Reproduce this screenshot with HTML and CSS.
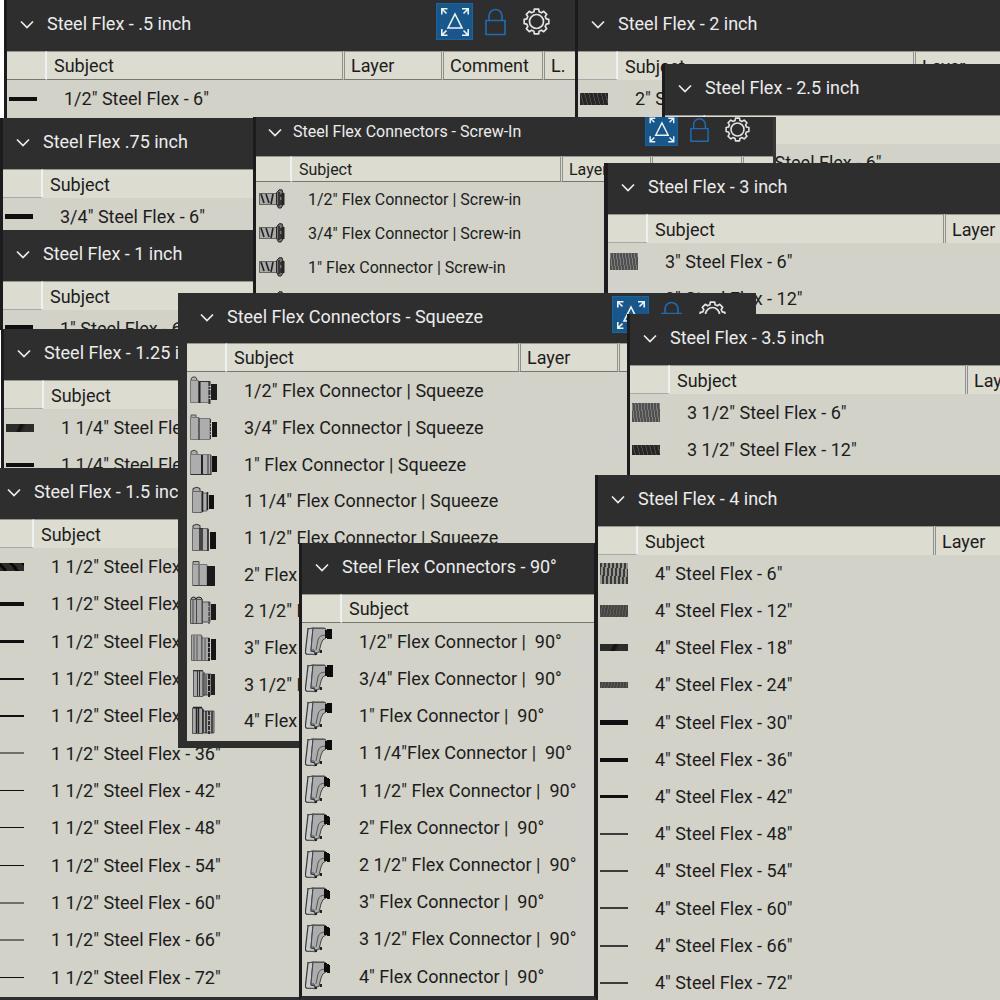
FILE: index.html
```html
<!DOCTYPE html>
<html lang="en">
<head>
<meta charset="utf-8">
<title>Steel Flex tool sets</title>
<link rel="stylesheet" href="styles.css">
</head>
<body>
<svg class="sprite" aria-hidden="true">
  <symbol id="chevron" viewBox="0 0 14 9"><path d="M1 1.5 7 7.5 13 1.5" fill="none" stroke="currentColor" stroke-width="1.7"/></symbol>
  <symbol id="fit" viewBox="0 0 37 37">
    <rect x=".5" y=".5" width="36" height="36" fill="#17578c" stroke="#1c649f"/>
    <g fill="none" stroke="#eef4f8" stroke-width="1.6">
      <path d="M19 11 26 25H12Z"/>
      <path d="M5.800 11.500V5.800H11.500M6 6l4.500 4.500M26 5.800h6.200V11.500M32 6l-4.500 4.500M5.800 26v6.200H11.500M6 32l4.500-4.500M32.200 26v6.200H26M32 32l-4.500-4.500"/>
    </g>
  </symbol>
  <symbol id="lock" viewBox="0 0 21 28"><path d="M1 12.500H20V26.500H1ZM4 12.500V8a6.500 6.500 0 0 1 13 0V12.500" fill="none" stroke="#1e6db3" stroke-width="1.6"/></symbol>
  <symbol id="gear" viewBox="-13.500 -13.500 27 27">
    <path d="M-2.600-9.700-2.200-12.300 2.200-12.300 2.600-9.700 5-8.700 7.200-10.200 10.200-7.200 8.700-5 9.700-2.600 12.300-2.200V2.200L9.700 2.600 8.700 5 10.200 7.200 7.200 10.200 5 8.700 2.600 9.700 2.200 12.300H-2.200L-2.600 9.700-5 8.700-7.200 10.200-10.200 7.200-8.700 5-9.700 2.600-12.300 2.200V-2.200L-9.700-2.600-8.700-5-10.200-7.200-7.200-10.200-5-8.700Z" fill="none" stroke="#e4e4e4" stroke-width="1.7" stroke-linejoin="round"/>
    <circle r="7" fill="none" stroke="#e4e4e4" stroke-width="1.700"/>
  </symbol>
  <symbol id="screw" viewBox="0 0 26 20">
    <rect x=".5" y="4.500" width="17" height="11" fill="#aaa" stroke="#666"/>
    <path d="M2 5l3 9M7 5l3 9M14 5l-2 10" stroke="#222" stroke-width="1.600"/>
    <path d="M17.500 4 20 .8H23L24 4V16L22 19H19.500L17.500 15Z" fill="#777" stroke="#222"/>
    <path d="M20 3v14M22 5v3M22 11v5" stroke="#222" stroke-width="1.500"/>
    <rect x="22.500" y="4" width="3" height="12" fill="#2b2424"/>
  </symbol>
  <symbol id="sq1" viewBox="0 0 28 30">
    <g fill="#adadad" stroke="#777"><path d="M1 4.500Q1 1 3 1H5Q7 1 7 5" stroke="#444"/><path d="M.5 4.500H8.500V26.500H.5Z"/><path d="M9 5.500H19V26.500H9Z"/></g>
    <path d="M9.500 5V27" stroke="#222" stroke-width="2"/><path d="M9 5.500H20" stroke="#333"/><path d="M19.500 5V29" stroke="#333" stroke-width="2" stroke-dasharray="5 1 2 1"/><rect x="21" y="8" width="6" height="16" fill="#1d1d1d"/>
  </symbol>
  <symbol id="sq2" viewBox="0 0 28 30">
    <g fill="#adadad" stroke="#777"><path d="M1 4.500V2H6V5" stroke="#555"/><path d="M.5 4.500H9V26.500H.5Z"/><path d="M9 5.500H20V26.500H9Z"/></g>
    <path d="M9 5V27" stroke="#333"/><path d="M20.500 6V27" stroke="#333" stroke-dasharray="4 1 2 1"/><rect x="22" y="9" width="5" height="15" fill="#161616"/>
  </symbol>
  <symbol id="sq3" viewBox="0 0 28 30">
    <g fill="#adadad" stroke="#777"><path d="M1 5V2.500Q4 0 7 2.500V5" stroke="#444"/><path d="M.5 5.500H20.500V25.500H.5Z"/></g>
    <path d="M12 6V26" stroke="#222" stroke-width="2"/><path d="M18 6V25M21 6V26M.5 25.500H21" stroke="#333"/><rect x="22" y="7" width="5" height="16" fill="#111"/>
  </symbol>
  <symbol id="sq4" viewBox="0 0 28 30">
    <g fill="#adadad" stroke="#666"><path d="M3 5V2.500Q7 0 10 2.500V5" stroke="#333"/><path d="M2.500 5.500H12V26.500H2.500Z"/><path d="M12 7H17V25H12Z"/></g>
    <path d="M12.500 5V26M17.500 6V24" stroke="#222" stroke-width="1.500"/><rect x="19" y="9" width="5" height="14" fill="#111"/>
  </symbol>
  <symbol id="sq5" viewBox="0 0 28 30">
    <g fill="#adadad" stroke="#666"><path d="M3 5V2.500Q7 0 10 2.500V5" stroke="#333"/><path d="M2.500 5.500H18V27.500H2.500Z"/></g>
    <path d="M10 5V27M12 5V27M18 6V28" stroke="#222" stroke-width="1.500"/><rect x="20" y="9" width="6" height="17" fill="#111"/>
  </symbol>
  <symbol id="sq6" viewBox="0 0 28 30">
    <g fill="#adadad" stroke="#777"><path d="M3 5V2.500H9V5" stroke="#444"/><path d="M2.500 5.500H17V26.500H2.500Z"/></g>
    <path d="M9 6V27M3 26.500H17" stroke="#444"/><rect x="17" y="7" width="8" height="20" fill="#1a1a1a"/>
  </symbol>
  <symbol id="sq7" viewBox="0 0 28 30">
    <g fill="#a8a8a8" stroke="#555"><path d="M1 4Q1 1 3.500 1 6 1 6 4 6 1 9 1 12 1 12 4" stroke="#222"/><path d="M.5 3.500H12.500V27.500H.5Z"/><path d="M12.500 6H20V26H12.500Z"/></g>
    <path d="M3 4V28M6.500 4V28M12 4V28" stroke="#444"/><path d="M19 6V28" stroke="#222" stroke-dasharray="4 1"/><rect x="21" y="8" width="5" height="16" fill="#1a1a1a"/>
  </symbol>
  <symbol id="sq8" viewBox="0 0 28 30">
    <g fill="#a8a8a8" stroke="#666"><path d="M1.500 2H11.500V27.500H1.500Z"/><path d="M11.500 5H19V27.500H11.500Z"/></g>
    <path d="M4 3V27M7 3V27M12 3V27M15 6V27" stroke="#555"/><path d="M19 5V28" stroke="#222" stroke-width="2" stroke-dasharray="4 1"/><rect x="21" y="6" width="5" height="21" fill="#161616"/>
  </symbol>
  <symbol id="sq9" viewBox="0 0 28 30">
    <g fill="#a8a8a8" stroke="#555"><path d="M3.500 2H13V27.500H3.500Z"/><path d="M13 5H21V26H13Z"/></g>
    <path d="M3 1.500H13M7.500 2V27M9.500 2V27M14 3V27M16 6V26" stroke="#333"/><path d="M19 5V28" stroke="#222" stroke-width="2" stroke-dasharray="5 1"/><rect x="21" y="5" width="4" height="21" fill="#222"/>
  </symbol>
  <symbol id="sq10" viewBox="0 0 28 30">
    <g fill="#a8a8a8" stroke="#555"><path d="M2.500 2H12.500V27.500H2.500Z"/><path d="M12.500 5H24V27H12.500Z"/></g>
    <path d="M3 1.500H12M6.500 2V27M8.500 2V27M13 3V27M16 5V27M22 5V27" stroke="#222" stroke-width="1.400"/><path d="M19 5V28" stroke="#333" stroke-width="2" stroke-dasharray="4 1"/>
  </symbol>
  <symbol id="elbow" viewBox="0 0 28 30">
    <path d="M3 2 8 1 6 24 10 25V27.500L1.500 27Q0 26 .5 24Z" fill="#c6cccd" stroke="#333" stroke-width="1.200"/>
    <path d="M8 1H19Q21 1 21 3V11Q17 12 16 17L14 25 10 27 9 23 6 23Z" fill="#adadad" stroke="#444"/>
    <path d="M21 8Q14 8 13 13L11 23M2 1.500H20M1 27.500H12M14 25h3" fill="none" stroke="#555"/>
    <path d="M10 25.500H12V28H10ZM15 23H17V26H15Z" fill="#222"/>
  </symbol>
  <symbol id="el1" viewBox="0 0 28 30"><use href="#elbow"/><path d="M20 3H22V2H27V12H22V11H20Z" fill="#0c0c0c"/></symbol>
  <symbol id="el2" viewBox="0 0 28 30"><use href="#elbow"/><path d="M20 3H22V1H28V13H22V12H20Z" fill="#0c0c0c"/></symbol>
  <symbol id="el3" viewBox="0 0 28 30"><use href="#elbow"/><path d="M19 2H22V3H24V4H25V12H22V11H19Z" fill="#0c0c0c"/></symbol>
</svg>

<main class="canvas">

<section class="panel half">
  <header><button class="fold" aria-label="Collapse"><svg><use href="#chevron"/></svg></button><h2>Steel Flex - .5 inch</h2>
    <div class="tools"><button aria-label="Fit"><svg class="fit"><use href="#fit"/></svg></button><button aria-label="Lock"><svg class="lock"><use href="#lock"/></svg></button><button aria-label="Settings"><svg class="gear"><use href="#gear"/></svg></button></div></header>
  <table class="ruled"><colgroup><col class="c-icon"><col class="c-subject"><col class="c-layer"><col class="c-comment"><col></colgroup>
    <thead><tr><th></th><th>Subject</th><th>Layer</th><th>Comment</th><th>L.</th></tr></thead>
    <tbody><tr><td><i class="pipe h4"></i></td><td>1/2" Steel Flex - 6"</td></tr></tbody></table>
</section>

<section class="panel two">
  <header><button class="fold" aria-label="Collapse"><svg><use href="#chevron"/></svg></button><h2>Steel Flex - 2 inch</h2></header>
  <table><colgroup><col class="c-icon"><col class="c-subject"><col></colgroup>
    <thead><tr><th></th><th>Subject</th><th>Layer</th></tr></thead>
    <tbody><tr><td><i class="pipe h12 coil"></i></td><td>2" Steel Flex - 6"</td></tr></tbody></table>
</section>

<section class="panel two-half">
  <header><button class="fold" aria-label="Collapse"><svg><use href="#chevron"/></svg></button><h2>Steel Flex - 2.5 inch</h2></header>
  <table><colgroup><col class="c-icon"><col class="c-subject"><col></colgroup>
    <thead><tr><th></th><th>Subject</th><th>Layer</th></tr></thead>
    <tbody><tr><td><i class="pipe h12 coil"></i></td><td>2 1/2" Steel Flex - 6"</td></tr></tbody></table>
</section>

<section class="panel three-quarter">
  <header><button class="fold" aria-label="Collapse"><svg><use href="#chevron"/></svg></button><h2>Steel Flex .75 inch</h2></header>
  <table><colgroup><col class="c-icon"><col class="c-subject"></colgroup>
    <thead><tr><th></th><th>Subject</th></tr></thead>
    <tbody><tr><td><i class="pipe h5"></i></td><td>3/4" Steel Flex - 6"</td></tr></tbody></table>
</section>

<section class="panel one">
  <header><button class="fold" aria-label="Collapse"><svg><use href="#chevron"/></svg></button><h2>Steel Flex - 1 inch</h2></header>
  <table><colgroup><col class="c-icon"><col class="c-subject"></colgroup>
    <thead><tr><th></th><th>Subject</th></tr></thead>
    <tbody><tr><td><i class="pipe h7"></i></td><td>1" Steel Flex - 6"</td></tr></tbody></table>
</section>

<section class="panel one-quarter">
  <header><button class="fold" aria-label="Collapse"><svg><use href="#chevron"/></svg></button><h2>Steel Flex - 1.25 inch</h2></header>
  <table><colgroup><col class="c-icon"><col class="c-subject"></colgroup>
    <thead><tr><th></th><th>Subject</th></tr></thead>
    <tbody><tr><td><i class="pipe h8 dark"></i></td><td>1 1/4" Steel Flex - 6"</td></tr>
    <tr><td><i class="pipe h4"></i></td><td>1 1/4" Steel Flex - 12"</td></tr></tbody></table>
</section>

<section class="panel one-half">
  <header><button class="fold" aria-label="Collapse"><svg><use href="#chevron"/></svg></button><h2>Steel Flex - 1.5 inch</h2></header>
  <table><colgroup><col class="c-icon"><col class="c-subject"></colgroup>
    <thead><tr><th></th><th>Subject</th></tr></thead>
    <tbody>
    <tr><td><i class="pipe h8 twist"></i></td><td>1 1/2" Steel Flex - 6"</td></tr>
    <tr><td><i class="pipe h4"></i></td><td>1 1/2" Steel Flex - 12"</td></tr>
    <tr><td><i class="pipe h3"></i></td><td>1 1/2" Steel Flex - 18"</td></tr>
    <tr><td><i class="pipe h2"></i></td><td>1 1/2" Steel Flex - 24"</td></tr>
    <tr><td><i class="pipe h2"></i></td><td>1 1/2" Steel Flex - 30"</td></tr>
    <tr><td><i class="pipe h2 faint"></i></td><td>1 1/2" Steel Flex - 36"</td></tr>
    <tr><td><i class="pipe h1"></i></td><td>1 1/2" Steel Flex - 42"</td></tr>
    <tr><td><i class="pipe h1"></i></td><td>1 1/2" Steel Flex - 48"</td></tr>
    <tr><td><i class="pipe h1"></i></td><td>1 1/2" Steel Flex - 54"</td></tr>
    <tr><td><i class="pipe h2 faint"></i></td><td>1 1/2" Steel Flex - 60"</td></tr>
    <tr><td><i class="pipe h2 faint"></i></td><td>1 1/2" Steel Flex - 66"</td></tr>
    <tr><td><i class="pipe h1"></i></td><td>1 1/2" Steel Flex - 72"</td></tr>
    </tbody></table>
</section>

<section class="panel screw-in">
  <header><button class="fold" aria-label="Collapse"><svg><use href="#chevron"/></svg></button><h2>Steel Flex Connectors - Screw-In</h2>
    <div class="tools"><button aria-label="Fit"><svg class="fit"><use href="#fit"/></svg></button><button aria-label="Lock"><svg class="lock"><use href="#lock"/></svg></button><button aria-label="Settings"><svg class="gear"><use href="#gear"/></svg></button></div></header>
  <table class="ruled"><colgroup><col class="c-icon"><col class="c-subject"><col class="c-layer"><col class="c-comment"><col></colgroup>
    <thead><tr><th></th><th>Subject</th><th>Layer</th><th></th><th></th></tr></thead>
    <tbody>
    <tr><td><svg class="bolt"><use href="#screw"/></svg></td><td>1/2" Flex Connector | Screw-in</td></tr>
    <tr><td><svg class="bolt"><use href="#screw"/></svg></td><td>3/4" Flex Connector | Screw-in</td></tr>
    <tr><td><svg class="bolt"><use href="#screw"/></svg></td><td>1" Flex Connector | Screw-in</td></tr>
    <tr><td><svg class="bolt"><use href="#screw"/></svg></td><td></td></tr>
    </tbody></table>
</section>

<section class="panel three">
  <header><button class="fold" aria-label="Collapse"><svg><use href="#chevron"/></svg></button><h2>Steel Flex - 3 inch</h2></header>
  <table><colgroup><col class="c-icon"><col class="c-subject"><col></colgroup>
    <thead><tr><th></th><th>Subject</th><th>Layer</th></tr></thead>
    <tbody><tr><td><i class="pipe h17 ribs"></i></td><td>3" Steel Flex - 6"</td></tr>
    <tr><td><i class="pipe h8 coil"></i></td><td>3" Steel Flex - 12"</td></tr></tbody></table>
</section>

<section class="panel squeeze">
  <header><button class="fold" aria-label="Collapse"><svg><use href="#chevron"/></svg></button><h2>Steel Flex Connectors - Squeeze</h2>
    <div class="tools"><button aria-label="Fit"><svg class="fit"><use href="#fit"/></svg></button><button aria-label="Lock"><svg class="lock"><use href="#lock"/></svg></button><button aria-label="Settings"><svg class="gear"><use href="#gear"/></svg></button></div></header>
  <table class="ruled"><colgroup><col class="c-icon"><col class="c-subject"><col class="c-layer"><col></colgroup>
    <thead><tr><th></th><th>Subject</th><th>Layer</th><th></th></tr></thead>
    <tbody>
    <tr><td><svg class="part"><use href="#sq1"/></svg></td><td>1/2" Flex Connector | Squeeze</td></tr>
    <tr><td><svg class="part"><use href="#sq2"/></svg></td><td>3/4" Flex Connector | Squeeze</td></tr>
    <tr><td><svg class="part"><use href="#sq3"/></svg></td><td>1" Flex Connector | Squeeze</td></tr>
    <tr><td><svg class="part"><use href="#sq4"/></svg></td><td>1 1/4" Flex Connector | Squeeze</td></tr>
    <tr><td><svg class="part"><use href="#sq5"/></svg></td><td>1 1/2" Flex Connector | Squeeze</td></tr>
    <tr><td><svg class="part"><use href="#sq6"/></svg></td><td>2" Flex Connector | Squeeze</td></tr>
    <tr><td><svg class="part"><use href="#sq7"/></svg></td><td>2 1/2" Flex Connector | Squeeze</td></tr>
    <tr><td><svg class="part"><use href="#sq8"/></svg></td><td>3" Flex Connector | Squeeze</td></tr>
    <tr><td><svg class="part"><use href="#sq9"/></svg></td><td>3 1/2" Flex Connector | Squeeze</td></tr>
    <tr><td><svg class="part"><use href="#sq10"/></svg></td><td>4" Flex Connector | Squeeze</td></tr>
    </tbody></table>
</section>

<section class="panel three-half">
  <header><button class="fold" aria-label="Collapse"><svg><use href="#chevron"/></svg></button><h2>Steel Flex - 3.5 inch</h2></header>
  <table><colgroup><col class="c-icon"><col class="c-subject"><col></colgroup>
    <thead><tr><th></th><th>Subject</th><th>Layer</th></tr></thead>
    <tbody><tr><td><i class="pipe h19 ribs"></i></td><td>3 1/2" Steel Flex - 6"</td></tr>
    <tr><td><i class="pipe h10 coil"></i></td><td>3 1/2" Steel Flex - 12"</td></tr></tbody></table>
</section>

<section class="panel four">
  <header><button class="fold" aria-label="Collapse"><svg><use href="#chevron"/></svg></button><h2>Steel Flex - 4 inch</h2></header>
  <table><colgroup><col class="c-icon"><col class="c-subject"><col></colgroup>
    <thead><tr><th></th><th>Subject</th><th>Layer</th></tr></thead>
    <tbody>
    <tr><td><i class="pipe h21 wide-ribs"></i></td><td>4" Steel Flex - 6"</td></tr>
    <tr><td><i class="pipe h12 mesh"></i></td><td>4" Steel Flex - 12"</td></tr>
    <tr><td><i class="pipe h7 dark"></i></td><td>4" Steel Flex - 18"</td></tr>
    <tr><td><i class="pipe h6 mesh"></i></td><td>4" Steel Flex - 24"</td></tr>
    <tr><td><i class="pipe h5"></i></td><td>4" Steel Flex - 30"</td></tr>
    <tr><td><i class="pipe h4"></i></td><td>4" Steel Flex - 36"</td></tr>
    <tr><td><i class="pipe h3"></i></td><td>4" Steel Flex - 42"</td></tr>
    <tr><td><i class="pipe h2 soft"></i></td><td>4" Steel Flex - 48"</td></tr>
    <tr><td><i class="pipe h2 soft"></i></td><td>4" Steel Flex - 54"</td></tr>
    <tr><td><i class="pipe h2 soft"></i></td><td>4" Steel Flex - 60"</td></tr>
    <tr><td><i class="pipe h2 soft"></i></td><td>4" Steel Flex - 66"</td></tr>
    <tr><td><i class="pipe h2 soft"></i></td><td>4" Steel Flex - 72"</td></tr>
    </tbody></table>
</section>

<section class="panel ninety">
  <header><button class="fold" aria-label="Collapse"><svg><use href="#chevron"/></svg></button><h2>Steel Flex Connectors - 90°</h2></header>
  <table class="ruled"><colgroup><col class="c-icon"><col></colgroup>
    <thead><tr><th></th><th>Subject</th></tr></thead>
    <tbody>
    <tr><td><svg class="part"><use href="#el1"/></svg></td><td>1/2" Flex Connector |&nbsp; 90°</td></tr>
    <tr><td><svg class="part"><use href="#el2"/></svg></td><td>3/4" Flex Connector |&nbsp; 90°</td></tr>
    <tr><td><svg class="part"><use href="#el1"/></svg></td><td>1" Flex Connector |&nbsp; 90°</td></tr>
    <tr><td><svg class="part"><use href="#el1"/></svg></td><td>1 1/4"Flex Connector |&nbsp; 90°</td></tr>
    <tr><td><svg class="part"><use href="#el3"/></svg></td><td>1 1/2" Flex Connector |&nbsp; 90°</td></tr>
    <tr><td><svg class="part"><use href="#el3"/></svg></td><td>2" Flex Connector |&nbsp; 90°</td></tr>
    <tr><td><svg class="part"><use href="#el3"/></svg></td><td>2 1/2" Flex Connector |&nbsp; 90°</td></tr>
    <tr><td><svg class="part"><use href="#el3"/></svg></td><td>3" Flex Connector |&nbsp; 90°</td></tr>
    <tr><td><svg class="part"><use href="#el3"/></svg></td><td>3 1/2" Flex Connector |&nbsp; 90°</td></tr>
    <tr><td><svg class="part"><use href="#el3"/></svg></td><td>4" Flex Connector |&nbsp; 90°</td></tr>
    </tbody></table>
</section>

</main>
</body>
</html>
```
FILE: styles.css
```css
* { box-sizing: border-box; }
body { margin: 0; background: #fff; font-family: Roboto, "Liberation Sans", sans-serif; font-size: 18px; color: #1c1c1c; }
.sprite { display: none; }
.canvas { position: relative; min-height: 100vh; overflow: hidden; }

/* Floating tool-set windows */
.panel { position: absolute; overflow: hidden; background: #d2d2c8; border-left: 3px solid #1c1c1e; }
.panel header { display: flex; align-items: flex-start; height: 51px; background: #2e2e2e; color: #ececec; }
.panel h2 { margin: 0; font-size: 18px; font-weight: 400; line-height: 48px; white-space: nowrap; }
button { padding: 0; border: 0; background: none; color: inherit; display: block; }
button svg { display: block; }
.fold { width: 40px; padding: 20px 13px; }
.fold svg { width: 14px; height: 9px; }
.tools { display: flex; align-items: center; margin-left: auto; padding: 3px 25px 0 0; }
.fit { width: 37px; height: 37px; margin-right: 12px; }
.lock { width: 21px; height: 28px; margin-right: 17px; }
.gear { width: 27px; height: 27px; }

/* Tool lists */
table { width: 100%; table-layout: fixed; border-collapse: separate; border-spacing: 0; }
.c-icon { width: 40px; }
.c-subject { width: 295px; }
.c-layer { width: 99px; }
.c-comment { width: 101px; }
th { height: 29px; padding: 0 0 0 7px; background: #dcdcd0; border-top: 1px solid #96968f; font-weight: 400; text-align: left; white-space: nowrap; }
th:first-child { border-bottom: 1px solid #a6a9ac; border-right: 2px solid #eef0f2; }
th + th + th { border-left: 3px double #8f8f8c; padding-left: 6px; }
.ruled th { border-bottom: 1px solid #777772; }
td { height: 37px; padding: 0 0 0 17px; white-space: nowrap; }
td:first-child { padding-left: 2px; }
.pipe, td svg { display: block; }
.part { width: 28px; height: 30px; }
.bolt { width: 26px; height: 20px; }

/* Conduit swatches */
.pipe { width: 28px; background: #0e0f0e; }
.h1 { height: 1px; }
.h2 { height: 2px; }
.h3 { height: 3px; }
.h4 { height: 4px; }
.h5 { height: 5px; }
.h6 { height: 6px; }
.h7 { height: 7px; }
.h8 { height: 8px; }
.h10 { height: 10px; }
.h12 { height: 12px; }
.h17 { height: 17px; }
.h19 { height: 19px; }
.h21 { height: 21px; }
.faint { background: #6f706b; }
.soft { background: #3c3c3a; }
.dark { background: linear-gradient(115deg, #2c2c2b 40%, #101010 50%, #2e2d2b 65%); }
.coil { background: repeating-linear-gradient(75deg, #262626 0 3px, #4b4a47 3px 4px); }
.twist { background: repeating-linear-gradient(50deg, #2e2b2a 0 6px, #0a0a0a 6px 9px); }
.ribs { background: repeating-linear-gradient(82deg, #505050 0 2px, #7d7d7a 2px 3px); }
.wide-ribs { background: repeating-linear-gradient(97deg, #3a3a39 0 2px, #969691 2px 4px); }
.mesh { background: repeating-linear-gradient(100deg, #464443 0 2px, #5e5b59 2px 3px); }

/* Window placement, back to front */
.half { left: 4px; top: 0; width: 573px; height: 118px; border-right: 2px solid #2a2a2a; }
.two { left: 575px; right: 0; top: 0; height: 118px; }
.two-half { left: 662px; right: 0; top: 64px; height: 100px; }
.three-quarter { left: 0; top: 118px; width: 255px; height: 112px; }
.one { left: 0; top: 230px; width: 255px; height: 100px; }
.one-quarter { left: 1px; top: 329px; width: 254px; height: 140px; }
.one-half { left: -9px; top: 468px; width: 320px; height: 532px; border-bottom: 3px solid #2e2e2e; }
.screw-in { left: 253px; top: 117px; width: 523px; height: 180px; border-right: 3px solid #3a3737; }
.three { left: 604px; right: 0; top: 163px; height: 155px; border-left-width: 4px; }
.squeeze { left: 178px; top: 293px; width: 578px; height: 455px; border: solid #2e2e2e; border-width: 0 5px 7px 9px; }
.three-half { left: 627px; right: 0; top: 314px; height: 165px; }
.four { left: 595px; right: 0; top: 475px; height: 530px; }
.ninety { left: 299px; top: 543px; width: 298px; height: 457px; border-right: 3px solid #1c1c1e; border-bottom: 4px solid #2e2e2e; }

/* Row rhythm of the long lists */
.one-half tr:nth-child(3n) td { height: 38px; }
.four tr:nth-child(5n) td, .ninety tr:nth-child(5n) td { height: 38px; }
.squeeze tr:nth-child(3n) td { height: 36px; }
.squeeze header { height: 50px; }
.squeeze .c-subject { width: 291px; }
.squeeze td:first-child { padding-left: 3px; }
.ninety td:first-child { padding-left: 3px; }

/* The screw-in window is shown at a smaller scale */
.screw-in header { height: 39px; }
.screw-in h2 { font-size: 16px; line-height: 30px; }
.screw-in .fold { width: 37px; padding: 11px 12px; }
.screw-in .tools { padding: 0 23px 0 0; margin-top: -4px; }
.screw-in .fit { width: 33px; height: 33px; }
.screw-in .lock { width: 19px; height: 26px; margin-right: 16px; }
.screw-in .gear { width: 25px; height: 25px; }
.screw-in .c-icon { width: 36px; }
.screw-in .c-subject { width: 268px; }
.screw-in .c-layer { width: 90px; }
.screw-in .c-comment { width: 91px; }
.screw-in th { height: 26px; font-size: 16px; }
.screw-in td { height: 34px; padding-left: 16px; font-size: 16px; }
.screw-in td:first-child { padding-left: 3px; }
```
